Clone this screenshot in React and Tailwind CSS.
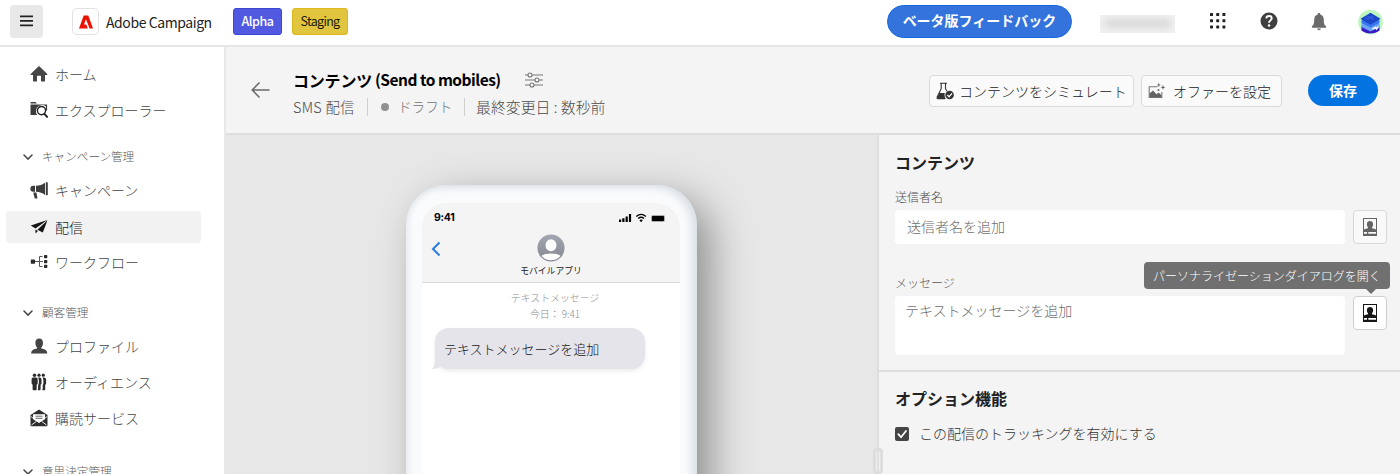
import React from "react";

function Home() {
  return (
    <svg width="18" height="18" viewBox="0 0 18 18" fill="#464646">
      <path d="M17.3 9 9.6 1.6a.8.8 0 0 0-1.2 0L.7 9c-.3.4-.1.9.4.9H3v6c0 .3.2.6.6.6H7v-5.2c0-.3.2-.5.5-.5h3c.3 0 .5.2.5.5v5.2h3.400c.4 0 .6-.3.6-.6v-6h1.900c.5 0 .7-.5.4-.9z" />
    </svg>
  );
}

function Explorer() {
  return (
    <svg width="18" height="18" viewBox="0 0 18 18">
      <path fill="#3c3c3c" d="M.5 2.600V1.600c0-.4.2-.6.6-.6h4.300L7 2.600z" />
      <path fill="#3c3c3c" d="M.5 3.600H16v1.900A6.200 6.200 0 0 0 6 10.500c0 1.500.5 2.600 1.200 3.500H1a.5.5 0 0 1-.5-.5z" />
      <circle cx="11.500" cy="9.600" r="4.100" fill="#fff" stroke="#222" strokeWidth="1.400" />
      <path d="m14.400 12.800 2.700 3" stroke="#222" strokeWidth="2" strokeLinecap="round" />
      <path d="M16.500 3.600v6" stroke="#3c3c3c" strokeWidth="1.200" />
    </svg>
  );
}

function Megaphone() {
  return (
    <svg width="18" height="18" viewBox="0 0 18 18" fill="#3c3c3c">
      <path d="M5 4.800H3.300a2.900 2.900 0 0 0 0 5.900H5z" />
      <path d="M6 4.800C9.500 4.700 12.500 3.700 15 1.700V14c-2.500-2-5.500-3.100-9-3.200z" />
      <path d="M15.800 1.200h1.500c.3 0 .5.200.5.500v12.100c0 .3-.2.500-.5.500h-1.500z" />
      <path d="M3.200 11.600h3.200l1 5.300c0 .4-.2.700-.6.700H5.300c-.4 0-.6-.2-.7-.6z" />
    </svg>
  );
}

function PaperPlane() {
  return (
    <svg width="18" height="18" viewBox="0 0 18 18" fill="#161616">
      <path d="M.8 7.600 17.300 2 5.500 10.400z" />
      <path d="m17.500 2.300-4.700 12.200-5.400-2.800z" />
      <path d="m5.400 11.400 2.600 1.500-2.500 2.600z" />
    </svg>
  );
}

function Workflow() {
  return (
    <svg width="18" height="18" viewBox="0 0 18 18" fill="#2a2a2a">
      <rect x=".8" y="6.500" width="4.200" height="4.200" rx=".4" />
      <rect x="14" y="2" width="3.300" height="3.300" rx=".8" />
      <rect x="14" y="6.900" width="3.300" height="3.300" rx=".8" />
      <rect x="14" y="11.800" width="3.300" height="3.300" rx=".8" />
      <path d="M5 8.500h8M12.500 3.500H9.500V13.500h3" fill="none" stroke="#555" strokeWidth="1" />
    </svg>
  );
}

function Person() {
  return (
    <svg width="18" height="18" viewBox="0 0 18 18" fill="#444">
      <path d="M11.300 11.500v-1c.9-.9 1.700-2.400 1.700-4.700C13 3 11.400 1.500 9.200 1.500S5.400 3 5.400 5.800c0 2.300.8 3.800 1.700 4.700v1C3.500 12 1.200 13.400 1.200 15.800v.7h16v-.7c0-2.400-2.300-3.800-5.900-4.300z" />
    </svg>
  );
}

function Audience() {
  return (
    <svg width="18" height="18" viewBox="0 0 18 18" fill="#2b2b2b">
      <circle cx="4.500" cy="2.200" r="1.700" />
      <circle cx="9" cy="2.200" r="1.600" />
      <circle cx="13.300" cy="2.200" r="1.600" />
      <path d="M3 4.600h3c1.200 0 1.700.9 1.700 2v3.800c0 .8-.5 1.100-1 1.200v4.700c0 .6-.3.900-.8.900H3.400c-.5 0-.8-.3-.8-.9v-4.700c-.6-.1-1-.5-1-1.200V6.600c0-1.100.5-2 1.400-2z" />
      <path d="M8 4.600h1.500c1.500 0 2 1 2 2v3.900c0 .8-.4 1.100-.9 1.200v4.600c0 .6-.3.900-.8.900H7.700c.6-1.300.4-3 .4-5 1.200-1.100 1-6.200-.1-7.600z" />
      <path d="M12.500 4.600h1.400c1.700 0 2.200 1 2.200 2v3.900c0 .8-.4 1.100-.9 1.200v4.600c0 .6-.3.900-.8.900h-2.100c.6-1.300.4-3 .4-5 1.200-1.100.9-6.200-.2-7.600z" />
    </svg>
  );
}

function Mail() {
  return (
    <svg width="18" height="18" viewBox="0 0 18 18">
      <path d="M.5 6 9 .4 17.500 6v10.600c0 .4-.2.700-.6.700H1.100c-.4 0-.6-.3-.6-.7z" fill="#2e2e2e" />
      <path d="M3 5.200h12v5L9 13.400l-6-3.200z" fill="#fff" />
      <path d="M5.500 7.200h7M5.500 9.300h7" stroke="#666" strokeWidth="1" />
      <path d="m1.500 16 5-3.800M16.500 16l-5-3.800M1 7.600l8 6 8-6" stroke="#fff" strokeWidth=".9" fill="none" />
    </svg>
  );
}

function Chevron() {
  return (
    <svg width="12" height="8" viewBox="0 0 12 8" fill="none" stroke="#4b4b4b" strokeWidth="1.600" strokeLinecap="round">
      <path d="m2 2 4 4 4-4" />
    </svg>
  );
}

function NavItem({ icon: Icon, children, className = "" }) {
  return (
    <div className={"ml-[6px] flex w-[195px] shrink-0 items-center rounded pl-[24px] text-[14px] " + className}>
      <Icon />
      <span className="ml-[7px] pb-px">{children}</span>
    </div>
  );
}

function NavSection({ children, className = "" }) {
  return (
    <div className={"flex h-[20px] shrink-0 items-center pl-[22px] text-[11.6px] text-[#5c5c5c] " + className}>
      <Chevron />
      <span className="ml-[8px]">{children}</span>
    </div>
  );
}

function PersonalizeButton({ active }) {
  return (
    <button className={"flex h-[34px] w-[34px] items-center justify-center rounded border " + (active ? "border-[#cfcfcf] bg-white" : "border-[#d8d8d8] bg-[#f9f9f9]")}>
      <svg width="16" height="18" viewBox="0 0 16 18" fill={active ? "#161616" : "#646464"}>
        <path fillRule="evenodd" d="M1 0h14v18H1zM2 1v10.400c1-.6 2.500-1 4-1.200v-.9C5.300 8.600 4.900 7.700 4.900 6 4.900 4 6.200 2.900 8 2.900s3.100 1.100 3.100 3.100c0 1.700-.4 2.600-1.100 3.300v.9c1.500.2 3 .6 4 1.200V1zM2 14v1.700h3V14zm4.300 0v1.700H14V14z" />
      </svg>
    </button>
  );
}

function TopBar() {
  return (
    <header className="flex h-[47px] shrink-0 items-start border-b-2 border-[#e6e6e6] bg-white">
      <button className="mt-[5px] ml-[10px] flex h-[33px] w-[33px] items-center justify-center rounded bg-[#e8e8e8]">
        <svg width="13" height="12" viewBox="0 0 13 12" className="-mt-[2px] fill-[#222]">
          <path d="M0 .5h13v1.700H0zM0 5h13v1.700H0zM0 9.500h13v1.700H0z" />
        </svg>
      </button>
      <div className="mt-[8px] ml-[29px] flex h-[27px] w-[27px] items-center justify-center rounded-[5px] border border-[#e2e2e2]">
        <svg width="14" height="14" viewBox="0 0 14 14" fill="#eb1000">
          <path d="M4.700.5h4.600L14 13.500h-3.400L7 4.300l-2 5.300h2.300l1.500 3.900H0z" />
        </svg>
      </div>
      <span className="mt-[10px] ml-[7px] w-[103px] text-[14px] leading-[24px] font-normal tracking-[-0.42px] text-[#222]">Adobe Campaign</span>
      <span className="mt-[8px] ml-[24px] flex h-[27px] w-[49px] items-center justify-center rounded-[3px] border border-[#3847d4] bg-[#5059df] text-[12.500px] font-medium tracking-[-0.5px] text-white">Alpha</span>
      <span className="mt-[8px] ml-[10px] flex h-[27px] w-[56px] items-center justify-center rounded-[3px] border border-[#dcb91c] bg-[#e1c53f] text-[12.500px] font-normal tracking-[-0.7px] text-[#1c1a0a]">Staging</span>
      <button className="mt-[5px] ml-[539px] flex h-[33px] w-[185px] items-center justify-center rounded-full border border-[#1668dc] bg-[#3473dc] text-[14px] font-bold text-white">
        <span className="-mt-[3px]">ベータ版フィードバック</span>
      </button>
      <div className="mt-[15px] ml-[28px] h-[18px] w-[75px] overflow-hidden bg-[#f0f0f0]">
        <div className="mx-auto mt-[4px] h-[9px] w-[66px] rounded bg-[#dadada] blur-[3px]" />
      </div>
      <svg width="16" height="16" viewBox="0 0 16 16" className="mt-[13px] ml-[35px] fill-[#222]">
        {[0, 6.2, 12.4].map((y) => [0, 6.2, 12.4].map((x) => <rect key={x + "-" + y} x={x} y={y} width="3" height="3" rx=".6" />))}
      </svg>
      <svg width="18" height="18" viewBox="0 0 18 18" className="mt-[12px] ml-[34px]">
        <circle cx="9" cy="9" r="8.500" fill="#3f3f3f" />
        <path d="M6.300 6.300C6.500 4.700 7.600 4 9 4c1.600 0 2.700.9 2.700 2.400C11.700 8.300 9 8.500 9 10.800" fill="none" stroke="#fff" strokeWidth="1.900" />
        <circle cx="9" cy="13.400" r="1.250" fill="#fff" />
      </svg>
      <svg width="16" height="18" viewBox="0 0 16 18" className="mt-[13px] ml-[33px] fill-[#6b6b6b]">
        <path d="M8 0c.8 0 1.300.5 1.300 1.400 2.400.6 3.500 2.500 3.500 5.400 0 4.200.7 5.300 2.200 6.500.3.300.2 1.400-.4 1.400H1.400c-.6 0-.7-1.100-.4-1.400 1.500-1.200 2.200-2.300 2.200-6.500 0-2.900 1.100-4.800 3.500-5.400C6.700.5 7.200 0 8 0zM6.200 15.600h3.600c-.1 1-.8 1.600-1.800 1.600s-1.700-.6-1.800-1.600z" />
      </svg>
      <svg width="25" height="26" viewBox="0 0 25 26" className="mt-[9px] ml-[31px]">
        <circle cx="12.500" cy="13" r="12.300" fill="#bdf7bd" />
        <path d="m3.500 17 9 4.500 9-4.500v4.500c-5 4-13 4-18 0z" fill="#3a18c8" />
        <path d="m3.500 14.500 9-4 9 4v3.500l-9 4.500-9-4.500z" fill="#6aa5f5" />
        <path d="m3.500 11 9-4 9 4v3l-9 4.500-9-4.500z" fill="#3778f0" />
        <path d="m2.500 9.700 10-6 10 6-10 6z" fill="#1d46c8" />
        <path d="m7 8.500 3 2 3-2 3 2M9 7l3 1.500L15 7" stroke="#3a67e8" fill="none" />
        <path d="m14.500 20 3-1.500 1 1.500 2-2.500" stroke="#fff" strokeWidth="1.400" fill="none" />
      </svg>
    </header>
  );
}

function Sidebar() {
  return (
    <nav className="flex h-[427px] w-[226px] shrink-0 flex-col overflow-hidden border-r-2 border-[#e8e8e8] bg-white">
      <NavItem icon={Home} className="mt-[11px] h-[32px] text-[#444]">ホーム</NavItem>
      <NavItem icon={Explorer} className="mt-[4px] h-[32px] text-[#444]">エクスプローラー</NavItem>
      <NavSection className="mt-[21px]">キャンペーン管理</NavSection>
      <NavItem icon={Megaphone} className="mt-[7px] h-[32px] text-[#444]">キャンペーン</NavItem>
      <NavItem icon={PaperPlane} className="mt-[5px] h-[32px] bg-[#f2f2f2] text-[#181818]">配信</NavItem>
      <NavItem icon={Workflow} className="mt-[3px] h-[32px] text-[#444]">ワークフロー</NavItem>
      <NavSection className="mt-[25px]">顧客管理</NavSection>
      <NavItem icon={Person} className="mt-[7px] h-[32px] text-[#444]">プロファイル</NavItem>
      <NavItem icon={Audience} className="mt-[4px] h-[32px] text-[#444]">オーディエンス</NavItem>
      <NavItem icon={Mail} className="mt-[4px] h-[32px] text-[#444]">購読サービス</NavItem>
      <NavSection className="mt-[28px]">意思決定管理</NavSection>
    </nav>
  );
}

function PageHeader() {
  return (
    <div className="flex h-[88px] shrink-0 items-start border-b-2 border-[#dedede] bg-[#f4f4f4]">
      <svg width="20" height="18" viewBox="0 0 20 18" className="mt-[34px] ml-[25px]" fill="none" stroke="#6a6a6a" strokeWidth="1.500">
        <path d="M18.500 9H1.500M8.500 1.500 1.200 9l7.300 7.500" />
      </svg>
      <div className="mt-[21px] ml-[22px] w-[320px]">
        <div className="flex h-[24px] items-center">
          <h1 className="flex w-[208px] text-[16px] font-bold text-black">
            <span className="w-[82px] tracking-[-0.2px]">コンテンツ</span>
            <span className="text-[15.500px] tracking-[-0.500px]">(Send to mobiles)</span>
          </h1>
          <svg width="18" height="18" viewBox="0 0 18 18" className="ml-[24px]" fill="none" stroke="#777" strokeWidth="1.100">
            <path d="M0 4h3M7 4h11M0 9h10M14 9h4M0 14h5M9 14h9" />
            <circle cx="5" cy="4" r="2" />
            <circle cx="12" cy="9" r="2" />
            <circle cx="7" cy="14" r="2" />
          </svg>
        </div>
        <div className="mt-[5px] flex h-[20px] items-center text-[14px] text-[#4a4a4a]">
          <span className="w-[62px] text-[14.400px] tracking-[0.3px]">SMS 配信</span>
          <span className="ml-[12px] h-[18px] w-px bg-[#cfcfcf]" />
          <span className="ml-[13px] h-[8px] w-[8px] rounded-full bg-[#909090]" />
          <span className="ml-[9px] w-[54px] text-[13.600px] text-[#717171]">ドラフト</span>
          <span className="ml-[12px] h-[18px] w-px bg-[#cfcfcf]" />
          <span className="ml-[11px] text-[14.900px]">最終変更日 : 数秒前</span>
        </div>
      </div>
      <button className="mt-[28px] ml-[316px] flex h-[32px] w-[205px] items-center rounded border border-[#dadada] bg-[#fafafa] pl-[6px] text-[14px] text-[#222]">
        <svg width="19" height="18" viewBox="0 0 19 18">
          <path d="M4 1.200h7M5.200 1.500v5.200L1.200 15c-.4.900 0 1.700.8 1.700h7M9.500 1.500v5.200l1.500 2.500" fill="none" stroke="#333" strokeWidth="1.100" />
          <path d="M3.300 11h5.500c-.6 2-.2 4.300 1 5.900H2.100c-.8 0-1.100-.7-.8-1.400z" fill="#333" />
          <circle cx="13.600" cy="13" r="4.300" fill="#333" />
          <path d="m11.400 13 1.700 1.800 2.900-3.500" fill="none" stroke="#fff" strokeWidth="1.300" />
        </svg>
        <span className="ml-[4px]">コンテンツをシミュレート</span>
      </button>
      <button className="mt-[28px] ml-[7px] flex h-[32px] w-[141px] items-center rounded border border-[#dadada] bg-[#fafafa] pl-[6px] text-[14px] text-[#222]">
        <svg width="18" height="18" viewBox="0 0 18 18" fill="#646464">
          <path d="M9.500 4.700H1.200v10.800h12.600V10" fill="none" stroke="#777" strokeWidth="1.100" />
          <path d="m1.500 11.500 3.500-3 3.500 3.700 2-1.700 3 2.700v2H1.500z" />
          <path d="m10.800.8.600 1.600 1.600.6-1.600.6-.6 1.600-.6-1.600L8.600 3l1.600-.6zM15 3l.7 1.700 1.700.7-1.700.7L15 7.800l-.7-1.700-1.700-.7 1.700-.7z" />
          <circle cx="10.500" cy="8" r="1" />
        </svg>
        <span className="ml-[7px]">オファーを設定</span>
      </button>
      <button className="mt-[28px] ml-[26px] flex h-[31px] w-[70px] items-center justify-center rounded-full bg-[#0473e2] pb-px text-[14px] font-bold text-white">保存</button>
    </div>
  );
}

function Phone() {
  return (
    <div className="relative ml-[180px] mt-[50px] h-[600px] w-[291px] shrink-0 rounded-[40px] bg-[#fafbfd] pt-[18px] shadow-[14px_14px_40px_rgba(0,0,0,0.38),inset_-5px_2px_9px_rgba(205,213,220,0.75),inset_3px_0_5px_rgba(225,230,236,0.6)]">
      <div className="ml-[16px] h-[580px] w-[258px] overflow-hidden rounded-t-[24px] bg-white">
        <div className="h-[80px] border-b border-[#d9d9d9] bg-[#f4f4f4]">
          <div className="flex items-center pt-[7px] pl-[12px]">
            <span className="w-[30px] font-['Inter'] text-[10.500px] leading-[16px] font-bold tracking-[-0.3px] text-black">9:41</span>
            <svg width="50" height="10" viewBox="0 0 50 10" className="ml-[154px]">
              <path d="M1 6.500h2.200V9H1zM4.300 5.200h2.200V9H4.300zM7.600 3.500h2.200V9H7.600zM10.900 1h2.200v8h-2.200z" />
              <path d="M18.300 3.600c2.900-2.700 6.700-2.700 9.600 0M20.200 5.600c1.800-1.600 4-1.600 5.800 0" fill="none" stroke="#000" strokeWidth="1.400" />
              <path d="m21.400 7.200 1.700 2 1.700-2c-.9-.8-2.500-.8-3.400 0z" />
              <rect x="33" y="2" width="14" height="7" rx="2" fill="#aaa" />
              <rect x="34" y="3" width="12" height="5" rx=".8" />
            </svg>
          </div>
          <div className="flex items-start pt-[7px] pl-[8px]">
            <svg width="10" height="16" viewBox="0 0 10 16" className="mt-[8px] ml-px" fill="none" stroke="#2c7be0" strokeWidth="2">
              <path d="M8.500 1.500 2 8l6.500 6.500" />
            </svg>
            <svg width="28" height="28" viewBox="0 0 28 28" className="ml-[96px] mt-[1px]">
              <defs>
                <linearGradient id="avatar" x1="0" y1="0" x2="0" y2="1">
                  <stop offset="0" stopColor="#a3a7b2" />
                  <stop offset="1" stopColor="#858791" />
                </linearGradient>
              </defs>
              <circle cx="14" cy="14" r="13.600" fill="url(#avatar)" />
              <ellipse cx="14" cy="11.300" rx="5.500" ry="6" fill="#fff" />
              <path d="M4.500 22c3-3.300 16-3.300 19 0-4.500 5.600-14.500 5.600-19 0z" fill="#fff" />
            </svg>
          </div>
          <div className="mt-[1px] text-center text-[8.800px] leading-[16px] font-normal text-[#222]">モバイルアプリ</div>
        </div>
        <div className="mt-[7px] pl-[8px] text-center text-[9.900px] leading-[16px] text-[#8a8a8a]">
          <div>テキストメッセージ</div>
          <div>今日： 9:41</div>
        </div>
        <div className="relative mt-[6px] ml-[13px] flex h-[41px] w-[210px] items-center rounded-[14px] bg-[#e5e4ea] pl-[9px] text-[13px] text-[#161616] shadow-[0_2px_4px_rgba(0,0,0,0.08)]">
          <svg width="14" height="13" viewBox="0 0 14 13" className="absolute bottom-0 -left-[3px] fill-[#e5e4ea]">
            <path d="M3 0c0 6 0 10-3 12.800 4 .2 6-.3 8-2L14 12V0z" />
          </svg>
          <span className="relative">テキストメッセージを追加</span>
        </div>
      </div>
    </div>
  );
}

function SettingsPanel() {
  return (
    <section className="relative h-[339px] w-[523px] shrink-0 border-l-2 border-[#dedede] bg-[#f4f4f4] text-[14px]">
      <div className="h-[237px] border-b-2 border-[#dedede] pl-[16px]">
        <h2 className="pt-[15px] text-[16px] leading-[24px] font-bold text-[#222]">コンテンツ</h2>
        <div className="mt-[13px] text-[12px] leading-[20px] text-[#4a4a4a]">送信者名</div>
        <div className="mt-[3px] flex">
          <div className="flex h-[34px] w-[450px] items-center rounded bg-white pb-[2px] pl-[12px] text-[#6e6e6e]">送信者名を追加</div>
          <div className="ml-[8px]"><PersonalizeButton /></div>
        </div>
        <div className="mt-[29px] text-[12px] leading-[20px] text-[#5a5a5a]">メッセージ</div>
        <div className="mt-[3px] flex">
          <div className="h-[59px] w-[450px] rounded bg-white pt-[4px] pl-[10px] leading-[20px] text-[#6e6e6e]">テキストメッセージを追加</div>
          <div className="relative ml-[8px]">
            <PersonalizeButton active />
            <div className="absolute right-[-3px] bottom-[66px] flex h-[27px] w-[246px] items-center justify-center rounded bg-[#707070] text-[12px] whitespace-nowrap text-white">
              パーソナライゼーションダイアログを開く
              <svg width="10" height="5" viewBox="0 0 10 5" className="absolute top-full right-[14px] fill-[#707070]">
                <path d="M0 0h10L5 5z" />
              </svg>
            </div>
          </div>
        </div>
      </div>
      <div className="pl-[16px]">
        <h2 className="pt-[14px] text-[16px] leading-[24px] font-bold text-[#222]">オプション機能</h2>
        <label className="mt-[14px] flex h-[20px] items-center text-[#333]">
          <svg width="14" height="14" viewBox="0 0 14 14">
            <rect width="14" height="14" rx="2" fill="#444" />
            <path d="m3.300 7.200 2.700 3L11 4" fill="none" stroke="#fff" strokeWidth="1.800" strokeLinecap="round" />
          </svg>
          <span className="ml-[10px] pb-[3px]">この配信のトラッキングを有効にする</span>
        </label>
      </div>
      <div className="absolute top-[313px] -left-[6px] flex h-[26px] w-[10px] justify-center gap-[2px] rounded border-2 border-[#dcdcdc] bg-[#e0e0e0] py-[2px]">
        <i className="w-px bg-[#eee]" />
        <i className="w-px bg-[#eee]" />
      </div>
    </section>
  );
}

export default function App() {
  return (
    <div className="flex h-[474px] w-[1400px] flex-col overflow-hidden bg-[#f4f4f4] font-['Noto_Sans_CJK_JP',sans-serif] font-light leading-none whitespace-nowrap">
      <TopBar />
      <div className="flex">
        <Sidebar />
        <main className="flex h-[427px] w-[1174px] flex-col overflow-hidden">
          <PageHeader />
          <div className="flex h-[339px]">
            <div className="flex h-[339px] w-[651px] items-start overflow-hidden bg-[#e7e7e7]">
              <Phone />
            </div>
            <SettingsPanel />
          </div>
        </main>
      </div>
    </div>
  );
}
